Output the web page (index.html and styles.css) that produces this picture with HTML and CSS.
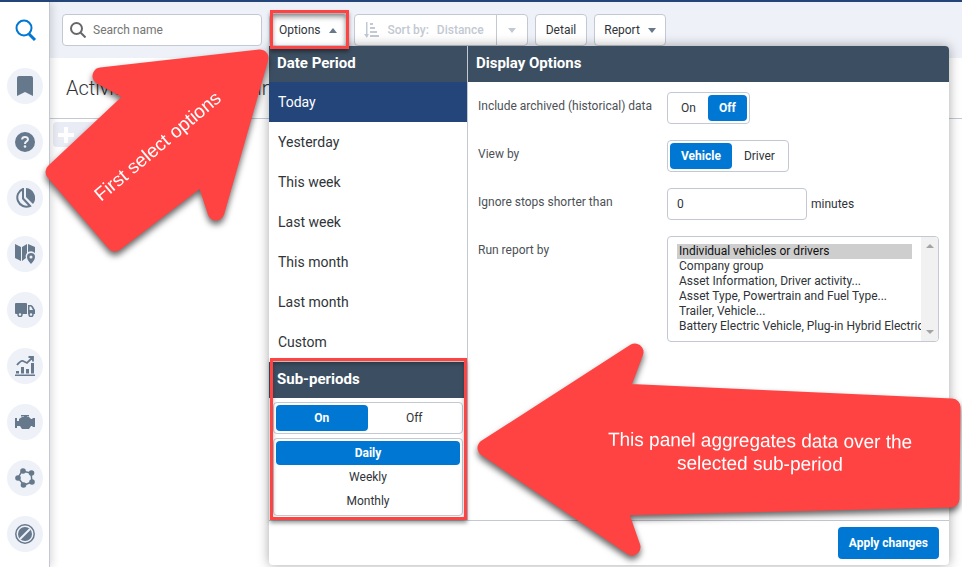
FILE: index.html
```
<!DOCTYPE html>
<html lang="en">
<head>
    <meta charset="UTF-8">
    <meta name="viewport" content="width=device-width, initial-scale=1.0">
    <title>Activity report options</title>
    <link rel="stylesheet" href="styles.css">
</head>
<body>
    <nav class="sidebar">
        <a href="#" class="nav-item nav-search" aria-label="Search">
            <svg width="24" height="24" viewBox="0 0 24 24" fill="none" stroke="currentColor" stroke-width="2"><circle cx="11" cy="10" r="7.500"/><path d="M16 16l6 6" stroke-width="3"/></svg>
        </a>
        <a href="#" class="nav-item" aria-label="Bookmarks">
            <svg width="20" height="22" viewBox="0 0 20 22"><path d="M4 1h12q2 0 2 2v18l-8-4-8 4V3q0-2 2-2z"/></svg>
        </a>
        <a href="#" class="nav-item" aria-label="Help">
            <svg width="20" height="20" viewBox="0 0 20 20"><circle cx="10" cy="10" r="10"/><path d="M7 7.500q.3-2.500 3-2.500t3 2.300q0 1.500-1.600 2.400Q10 10.500 10 12" fill="none" stroke="#eef1f8" stroke-width="2"/><circle cx="10" cy="14.500" r="1.300" fill="#eef1f8"/></svg>
        </a>
        <a href="#" class="nav-item" aria-label="Dashboard">
            <svg width="20" height="20" viewBox="0 0 20 20"><path d="M11 0a10 10 0 0 1 7 16L11 9z"/><path d="M8 1a9 9 0 1 0 7 17L8 10.500z" fill="none" stroke="currentColor" stroke-width="2"/></svg>
        </a>
        <a href="#" class="nav-item" aria-label="Map">
            <svg width="20" height="20" viewBox="0 0 20 20"><path d="M0 0l6 3v14l-6-3zM7 3l5-3v9q-2 2-1 5l-4 3zM13 0l7 3v6q-3-3-7-1z"/><path d="M16 9a4 4 0 0 1 4 4q0 3-4 7-4-4-4-7a4 4 0 0 1 4-4zm0 2.500a1.500 1.500 0 1 0 0 3 1.500 1.500 0 0 0 0-3z" fill-rule="evenodd"/></svg>
        </a>
        <a href="#" class="nav-item" aria-label="Vehicles">
            <svg width="20" height="14" viewBox="0 0 20 14"><path d="M1 0h10q1 0 1 1v10H1q-1 0-1-1V1q0-1 1-1zM13 2h3q1 0 2 1.500L20 7v4h-7z"/><path d="M14.500 3.500H16L18 7h-3.500z" fill="#eef1f8"/><g fill="#eef1f8" stroke="currentColor" stroke-width="1.500"><circle cx="5" cy="11.500" r="2"/><circle cx="16" cy="11.500" r="2"/></g></svg>
        </a>
        <a href="#" class="nav-item" aria-label="Activity">
            <svg width="20" height="20" viewBox="0 0 20 20"><path d="M0 18.500h20V20H0zM1 15h3v2.500H1zM6 11h3v6.500H6zM11 13h3v4.500h-3zM16 7h3v10.500h-3z"/><path d="M2 9q4-5 6-4t4 2l6-6M13.500 1H18v4.500" fill="none" stroke="currentColor" stroke-width="1.800"/></svg>
        </a>
        <a href="#" class="nav-item" aria-label="Engine">
            <svg width="20" height="14" viewBox="0 0 20 14"><path d="M6 0h8v1.500h-2V2h2l2 2h1l1-1h2v9h-2l-1-1h-1l-2 3H7l-2-3H2v2H0V3h2v3h2V4l3-2h2v-.5H6z"/></svg>
        </a>
        <a href="#" class="nav-item" aria-label="Zones">
            <svg width="20" height="20" viewBox="0 0 20 20"><path d="M7 3l9 2 1 9-8 3-6-7z" fill="none" stroke="currentColor" stroke-width="1.500"/><circle cx="8" cy="3" r="2.800"/><circle cx="16.500" cy="5" r="2.800"/><circle cx="17" cy="14" r="2.800"/><circle cx="8.500" cy="17" r="2.800"/><circle cx="3" cy="10" r="2.800"/></svg>
        </a>
        <a href="#" class="nav-item" aria-label="Rules">
            <svg width="20" height="20" viewBox="0 0 20 20"><circle cx="10" cy="10" r="9.200" fill="none" stroke="currentColor" stroke-width="1.500"/><circle cx="10" cy="10" r="7"/><path d="M5 15L15 5" stroke="#eef1f8" stroke-width="2"/></svg>
        </a>
    </nav>

    <main class="content">
        <div class="toolbar">
            <div class="search">
                <svg width="16" height="16" viewBox="0 0 16 16" fill="none" stroke="#66686a" stroke-width="2"><circle cx="6.500" cy="6.500" r="5.500"/><path d="M10.500 10.500l5 5"/></svg>
                <input type="text" placeholder="Search name" aria-label="Search name">
            </div>
            <div class="options-wrap">
                <button type="button" class="btn btn-open">Options <span class="arrow arrow-up"></span></button>
                <div class="highlight highlight-button"></div>
            </div>
            <div class="btn-group">
                <button type="button" class="btn btn-sort" disabled>
                    <svg width="16" height="16" viewBox="0 0 16 16" fill="#c3c9d2"><path d="M2 0h1.500v12H5l-2.200 4L0 12h2zM6 1h3v2H6zM6 5h5v2H6zM6 9h7v2H6zM6 13h9v2H6z"/></svg>
                    <span>Sort by:</span> <span>Distance</span>
                </button>
                <button type="button" class="btn btn-drop" aria-label="Sort order" disabled><span class="arrow arrow-down"></span></button>
            </div>
            <button type="button" class="btn btn-detail">Detail</button>
            <button type="button" class="btn">Report <span class="arrow arrow-down"></span></button>

            <form class="panel">
                <div class="panel-body">
                    <div class="periods">
                        <h2>Date Period</h2>
                        <ul>
                            <li><a href="#" class="active">Today</a></li>
                            <li><a href="#">Yesterday</a></li>
                            <li><a href="#">This week</a></li>
                            <li><a href="#">Last week</a></li>
                            <li><a href="#">This month</a></li>
                            <li><a href="#">Last month</a></li>
                            <li><a href="#">Custom</a></li>
                        </ul>
                        <div class="sub-periods">
                            <h2>Sub-periods</h2>
                            <div class="sub-body">
                                <div class="segment segment-wide">
                                    <label><input type="radio" name="sub" checked><span>On</span></label>
                                    <label><input type="radio" name="sub"><span>Off</span></label>
                                </div>
                                <div class="segment segment-stack">
                                    <label><input type="radio" name="step" checked><span>Daily</span></label>
                                    <label><input type="radio" name="step"><span>Weekly</span></label>
                                    <label><input type="radio" name="step"><span>Monthly</span></label>
                                </div>
                            </div>
                            <div class="highlight highlight-sub"></div>
                        </div>
                    </div>
                    <div class="display">
                        <h2>Display Options</h2>
                        <div class="fields">
                            <span class="field-label">Include archived (historical) data</span>
                            <div class="segment">
                                <label><input type="radio" name="archived"><span>On</span></label>
                                <label><input type="radio" name="archived" checked><span>Off</span></label>
                            </div>
                            <span class="field-label">View by</span>
                            <div class="segment">
                                <label><input type="radio" name="view" checked><span>Vehicle</span></label>
                                <label><input type="radio" name="view"><span>Driver</span></label>
                            </div>
                            <label class="field-label" for="stops">Ignore stops shorter than</label>
                            <div class="stops">
                                <input type="text" id="stops" value="0">
                                <span>minutes</span>
                            </div>
                            <label class="field-label" for="runby">Run report by</label>
                            <div class="listbox">
                                <select id="runby" multiple size="6">
                                    <option selected>Individual vehicles or drivers</option>
                                    <option>Company group</option>
                                    <option>Asset Information, Driver activity...</option>
                                    <option>Asset Type, Powertrain and Fuel Type...</option>
                                    <option>Trailer, Vehicle...</option>
                                    <option>Battery Electric Vehicle, Plug-in Hybrid Electric Vehicle...</option>
                                </select>
                                <div class="scrollbar"><span class="arrow arrow-up"></span><span class="arrow arrow-down"></span></div>
                            </div>
                        </div>
                    </div>
                </div>
                <div class="panel-footer">
                    <button type="submit" class="btn-apply">Apply changes</button>
                </div>
            </form>
        </div>

        <h1>Activity Report - Trips in</h1>
        <button type="button" class="add" aria-label="Add"><svg width="16" height="16" viewBox="0 0 16 16" fill="#fff"><path d="M6 0h4v6h6v4h-6v6H6v-6H0V6h6z"/></svg></button>
    </main>

    <svg class="callout callout-options" width="240" height="220" viewBox="40 44 240 220">
        <polygon points="101,76 260,58 216,212 204,175 115,243 54,172 136,95"/>
        <text transform="translate(101 202) rotate(-40)">First select options</text>
    </svg>
    <svg class="callout callout-sub" width="492" height="232" viewBox="470 335 492 232">
        <polygon points="486,448 635,352 620,392 952,407 951,499 618,507 632,547"/>
        <g transform="rotate(0.5 760 448)">
            <text x="760" y="447" text-anchor="middle">This panel aggregates data over the</text>
            <text x="760" y="470" text-anchor="middle">selected sub-period</text>
        </g>
    </svg>
</body>
</html>
```
FILE: styles.css
```
* {
    box-sizing: border-box;
}
body {
    margin: 0;
    display: flex;
    min-height: 100vh;
    position: relative;
    overflow: hidden;
    border-top: 2px solid #24457a;
    font-family: Roboto, "Liberation Sans", sans-serif;
    font-size: 12px;
    color: #303438;
    background-color: #fff;
}
button, input, select {
    font: inherit;
    color: inherit;
}

/* Sidebar */
.sidebar {
    flex: 0 0 50px;
    display: flex;
    flex-direction: column;
    align-items: center;
    gap: 20px;
    padding-top: 10px;
    border-right: 1px solid #c3c9d2;
    box-shadow: 2px 0 8px rgba(0, 0, 0, 0.15);
    z-index: 1;
}
.nav-item {
    display: flex;
    align-items: center;
    justify-content: center;
    width: 36px;
    height: 36px;
    border-radius: 50%;
    background-color: #eef1f8;
    color: #66788c;
}
.nav-item svg {
    fill: currentColor;
}
.nav-search {
    background-color: transparent;
    color: #0078d3;
}
.nav-search svg {
    fill: none;
}

/* Toolbar */
.content {
    flex: 1;
    min-width: 0;
}
.toolbar {
    position: relative;
    display: flex;
    gap: 7px;
    height: 56px;
    padding: 12px;
    background-color: #eef1f8;
}
.search {
    display: flex;
    align-items: center;
    gap: 7px;
    width: 200px;
    height: 32px;
    padding: 0 7px;
    border: 1px solid #c3c9d2;
    border-radius: 4px;
    background-color: #fff;
}
.search input {
    flex: 1;
    min-width: 0;
    padding: 0;
    border: none;
    background: none;
    outline: none;
}
.search input::placeholder {
    color: #757575;
}
.btn {
    display: flex;
    align-items: center;
    gap: 8px;
    height: 32px;
    padding: 0 9px;
    border: 1px solid #c3c9d2;
    border-radius: 4px;
    background-color: #fff;
    cursor: pointer;
    white-space: nowrap;
}
.options-wrap {
    position: relative;
    z-index: 3;
}
.btn-open {
    box-shadow: inset 0 2px 6px rgba(0, 0, 0, 0.25);
}
.btn-group {
    display: flex;
}
.btn-detail {
    padding: 0 10px;
}
.btn-sort {
    padding-right: 12px;
    border-radius: 4px 0 0 4px;
    font-weight: 500;
    color: #c3c9d2;
}
.btn-drop {
    margin-left: -1px;
    padding: 0 11px;
    border-radius: 0 4px 4px 0;
    color: #c3c9d2;
}
.arrow {
    border-left: 4px solid transparent;
    border-right: 4px solid transparent;
}
.arrow-up {
    border-bottom: 5px solid #66788c;
}
.arrow-down {
    border-top: 5px solid #66788c;
}
.btn-drop .arrow {
    border-top-color: #c3c9d2;
}

/* Options panel */
.panel {
    position: absolute;
    top: 44px;
    left: 219px;
    right: 13px;
    z-index: 2;
    border-radius: 4px;
    background-color: #fff;
    box-shadow: 0 0 12px rgba(0, 0, 0, 0.35);
}
.panel h2 {
    margin: 0;
    padding: 0 8px;
    font-size: 15px;
    line-height: 35px;
    height: 36px;
    color: #fff;
    background-color: #3c4f62;
}
.panel-body {
    display: flex;
    border-bottom: 1px solid #c3c9d2;
}
.periods {
    flex: 0 0 199px;
    border-right: 1px solid #c3c9d2;
}
.display {
    flex: 1;
    min-width: 0;
}
.display h2 {
    border-radius: 0 4px 0 0;
}
.periods ul {
    margin: 0;
    padding: 0;
    list-style: none;
}
.periods a {
    display: block;
    padding: 0 9px;
    font-size: 14px;
    line-height: 40px;
    color: inherit;
    text-decoration: none;
}
.periods a.active {
    color: #fff;
    background-color: #24457a;
}
.sub-periods {
    position: relative;
}
.sub-body {
    display: grid;
    gap: 4px;
    padding: 4px;
}
.segment {
    display: flex;
    justify-self: start;
    gap: 1px;
    height: 32px;
    padding: 2px;
    border: 1px solid #c3c9d2;
    border-radius: 4px;
}
.segment input {
    position: absolute;
    opacity: 0;
    pointer-events: none;
}
.segment label {
    display: flex;
}
.segment span {
    flex: 1;
    padding: 0 11px;
    border-radius: 4px;
    line-height: 26px;
    text-align: center;
}
.segment input:checked + span {
    font-weight: bold;
    color: #fff;
    background-color: #0078d3;
}
.segment-wide, .segment-stack {
    justify-self: stretch;
}
.segment-wide label {
    flex: 1;
}
.segment-stack {
    flex-direction: column;
    gap: 0;
    height: auto;
}
.segment-stack span {
    line-height: 24px;
}
.fields {
    display: grid;
    grid-template-columns: 189px 1fr;
    row-gap: 16px;
    padding: 10px;
}
.field-label {
    line-height: 28px;
    color: #4c5156;
}
.stops {
    display: flex;
    align-items: center;
    gap: 4px;
}
.stops input {
    width: 140px;
    height: 32px;
    padding: 0 9px;
    border: 1px solid #c3c9d2;
    border-radius: 4px;
}
.listbox {
    display: flex;
    height: 106px;
    border: 1px solid #c3c9d2;
    border-radius: 4px;
    overflow: hidden;
}
.listbox select {
    flex: 1;
    min-width: 0;
    padding: 7px 9px;
    border: none;
    outline: none;
    overflow: hidden;
    background: none;
}
.listbox option {
    height: 15px;
    min-height: 15px;
    padding: 0 2px;
    line-height: 15px;
}
.listbox option:checked {
    background-color: #cecece;
}
.scrollbar {
    flex: 0 0 17px;
    display: flex;
    flex-direction: column;
    align-items: center;
    justify-content: space-between;
    padding: 7px 0;
    background-color: #f1f1f1;
}
.scrollbar .arrow {
    border-width: 4px;
    border-color: transparent;
}
.scrollbar .arrow-up {
    border-top: none;
    border-bottom-color: #a3a3a3;
}
.scrollbar .arrow-down {
    border-bottom: none;
    border-top-color: #a3a3a3;
}
.panel-footer {
    display: flex;
    justify-content: flex-end;
    padding: 6px 10px;
}
.btn-apply {
    height: 32px;
    padding: 0 11px;
    border: none;
    border-radius: 4px;
    font-weight: bold;
    color: #fff;
    background-color: #0078d3;
    cursor: pointer;
}

/* Page behind the panel */
h1 {
    margin: 0;
    padding: 0 16px;
    height: 61px;
    line-height: 60px;
    font-size: 20px;
    font-weight: 300;
    white-space: nowrap;
    border-bottom: 1px solid #c3c9d2;
}
.add {
    display: flex;
    align-items: center;
    width: 44px;
    height: 25px;
    margin: 3px;
    padding: 0 5px;
    border: none;
    border-radius: 4px;
    background-color: #e9ecf4;
}

/* Annotations */
.highlight {
    position: absolute;
    border: 3px solid #ff4343;
    box-shadow: 0 3px 4px rgba(0, 0, 0, 0.4), inset 0 3px 4px rgba(0, 0, 0, 0.3);
    pointer-events: none;
}
.highlight-button {
    inset: -4px -2px -3px 1px;
}
.highlight-sub {
    inset: -4px 0 0 1px;
}
.callout {
    position: absolute;
    z-index: 4;
    pointer-events: none;
    font-family: "Liberation Sans", Arial, sans-serif;
    font-size: 19px;
    filter: drop-shadow(0 4px 3px rgba(0, 0, 0, 0.6));
}
.callout polygon {
    fill: #ff4343;
    stroke: #ff4343;
    stroke-width: 17px;
    stroke-linejoin: round;
}
.callout text {
    fill: #fff;
}
.callout-options {
    top: 42px;
    left: 40px;
}
.callout-sub {
    top: 333px;
    right: 0;
}
```
